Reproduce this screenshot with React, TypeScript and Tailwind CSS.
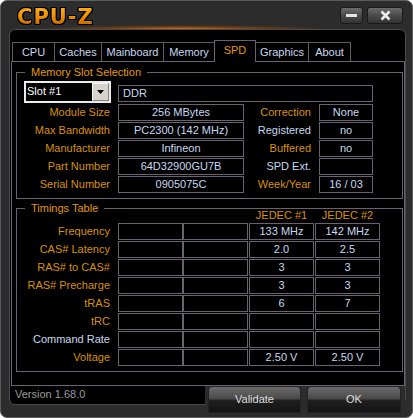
import React from "react"

type SpdRow = {
  label: string
  value: string
  rlabel: string
  rvalue: string
  rOrange: boolean
}

const spdRows: SpdRow[] = [
  { label: "Module Size", value: "256 MBytes", rlabel: "Correction", rvalue: "None", rOrange: true },
  { label: "Max Bandwidth", value: "PC2300 (142 MHz)", rlabel: "Registered", rvalue: "no", rOrange: false },
  { label: "Manufacturer", value: "Infineon", rlabel: "Buffered", rvalue: "no", rOrange: true },
  { label: "Part Number", value: "64D32900GU7B", rlabel: "SPD Ext.", rvalue: "", rOrange: false },
  { label: "Serial Number", value: "0905075C", rlabel: "Week/Year", rvalue: "16 / 03", rOrange: true },
]

// label, jedec #1, jedec #2, orange label?
const timings: [string, string, string, boolean][] = [
  ["Frequency", "133 MHz", "142 MHz", true],
  ["CAS# Latency", "2.0", "2.5", true],
  ["RAS# to CAS#", "3", "3", true],
  ["RAS# Precharge", "3", "3", true],
  ["tRAS", "6", "7", true],
  ["tRC", "", "", true],
  ["Command Rate", "", "", false],
  ["Voltage", "2.50 V", "2.50 V", true],
]

const tabs = [
  { name: "CPU", w: "w-[42px]" },
  { name: "Caches", w: "w-[47px]" },
  { name: "Mainboard", w: "w-[62px]" },
  { name: "Memory", w: "w-[51px]" },
  { name: "SPD", w: "w-[42px]", active: true },
  { name: "Graphics", w: "w-[52px]" },
  { name: "About", w: "w-[43px]", last: true },
]

const box = "h-[17px] border border-[#6a6270] flex items-center justify-center leading-[15px] text-[#c8d8f0]"

function Group({ title, children, className }: { title: string; children: React.ReactNode; className?: string }) {
  return (
    <div className={`relative ml-[4px] w-[387px] border border-[#6a6270] ${className ?? ""}`}>
      <span className="absolute -top-[7px] left-[8px] bg-black px-[6px] leading-[13px] text-[#e09a08]">{title}</span>
      {children}
    </div>
  )
}

export default function App() {
  return (
    <div className="relative w-[413px] h-[418px] overflow-hidden rounded-[7px] border border-[#5c5c5c] bg-[#2c2c2c] font-['Liberation_Sans',Arial,sans-serif] text-[11px]">
      {/* Title bar */}
      <div className="flex h-[28px] justify-between">
        <div className="pl-[16px] pt-[6px] text-[21px] leading-[21px] font-bold tracking-[1px] font-['DejaVu_Sans',sans-serif] bg-[linear-gradient(#ffc030,#f09000_55%,#b05800)] bg-clip-text text-transparent [filter:drop-shadow(1px_0_0_#000)_drop-shadow(-1px_0_0_#000)_drop-shadow(0_1px_0_#000)_drop-shadow(0_-1px_0_#000)]">
          CPU-Z
        </div>
        <div className="flex gap-[4px] pt-[6px] pr-[9px]">
          <button className="flex h-[17px] w-[23px] items-center justify-center rounded-[3px] border border-[#1a1a1a] bg-[linear-gradient(#6c6c6c,#4a4a4a_50%,#333)]">
            <span className="block h-[3px] w-[11px] bg-[#e4e4e4]" />
          </button>
          <button className="flex h-[17px] w-[36px] items-center justify-center rounded-[3px] border border-[#1a1a1a] bg-[linear-gradient(#6c6c6c,#4a4a4a_50%,#333)]">
            <svg width="11" height="11" viewBox="0 0 11 11">
              <path d="M1.5 1.5 L9.5 9.5 M9.5 1.5 L1.5 9.5" stroke="#eeeeee" strokeWidth="2.6" />
            </svg>
          </button>
        </div>
      </div>

      {/* orange glow under the title */}
      <div className="absolute left-[30px] top-[24px] h-[8px] w-[300px] bg-[radial-gradient(ellipse_at_center,#e07810_0%,rgba(170,80,0,0.55)_35%,transparent_70%)]" />

      {/* Black client area */}
      <div className="relative ml-[8px] h-[376px] w-[397px] rounded-[6px] border border-[#4a4a4a] bg-black">
        {/* Tabs */}
        <div className="mt-[10px] flex h-[21px] items-end pl-[2px]">
          {tabs.map((t) =>
            t.active ? (
              <div
                key={t.name}
                className={`relative z-10 -mb-[1px] flex h-[22px] items-center justify-center border-x border-t border-[#6a6270] bg-black pb-[2px] text-[#e8960a] ${t.w}`}
              >
                {t.name}
              </div>
            ) : (
              <div
                key={t.name}
                className={`flex h-[19px] items-center justify-center border-t border-[#5e5e5e] text-[#c8d8f0] ${t.w} ${
                  t.name === "Graphics" ? "" : "border-l"
                } ${t.last ? "border-r" : ""}`}
              >
                {t.name}
              </div>
            )
          )}
        </div>

        {/* SPD panel */}
        <div className="ml-[1px] h-[325px] w-[394px] border border-[#6a6270]">
          <Group title="Memory Slot Selection" className="mt-[10px] pt-[8px] pb-[5px]">
            <div className="flex flex-col gap-[1px] pl-[7px]">
              <div className="flex h-[22px]">
                <div className="flex w-[87px] border-2 border-[#ececec] bg-black">
                  <span className="flex-1 pl-[1px] leading-[16px] text-white">Slot #1</span>
                  <div className="flex w-[17px] items-center justify-center border border-[#f4f4f4] border-r-[#808080] border-b-[#808080] bg-[#d6d3ce]">
                    <svg width="7" height="4" viewBox="0 0 7 4">
                      <path d="M0 0 H7 L3.5 4 Z" fill="#000" />
                    </svg>
                  </div>
                </div>
                <div className={`${box} ml-[7px] mt-[4px] w-[255px] justify-start pl-[4px]`}>DDR</div>
              </div>
              {spdRows.map((r) => (
                <div key={r.label} className="-ml-[7px] flex">
                  <span className="w-[93px] text-right leading-[17px] text-[#d89200]">{r.label}</span>
                  <div className={`${box} ml-[8px] w-[126px]`}>{r.value}</div>
                  <span
                    className={`w-[67px] text-right leading-[17px] ${r.rOrange ? "text-[#d89200]" : "text-[#c8d8f0]"}`}
                  >
                    {r.rlabel}
                  </span>
                  <div className={`${box} ml-[8px] w-[54px]`}>{r.rvalue}</div>
                </div>
              ))}
            </div>
          </Group>

          <Group title="Timings Table" className="mt-[9px] pb-[5px]">
            <div className="flex h-[14px] leading-[13px] text-[#d89200]">
              <span className="ml-[232px] w-[65px] text-center">JEDEC #1</span>
              <span className="ml-[1px] w-[65px] text-center">JEDEC #2</span>
            </div>
            <div className="flex flex-col gap-[1px]">
              {timings.map(([label, a, b, orange]) => (
                <div key={label} className="flex">
                  <span className={`w-[93px] text-right leading-[17px] ${orange ? "text-[#d89200]" : "text-[#c8d8f0]"}`}>
                    {label}
                  </span>
                  <div className={`${box} ml-[8px] w-[65px]`} />
                  <div className={`${box} w-[65px]`} />
                  <div className={`${box} ml-[1px] w-[65px]`}>{a}</div>
                  <div className={`${box} ml-[1px] w-[65px]`}>{b}</div>
                </div>
              ))}
            </div>
          </Group>
        </div>

        {/* Footer */}
        <div className="flex h-[18px] items-start">
          <span className="pl-[5px] pt-[2px] leading-[13px] text-[#9a9a9a]">Version 1.68.0</span>
          <div className="ml-auto flex h-[31px] gap-[6px] bg-[#2c2c2c] pl-[3px] pr-[4px]">
            <button className="h-[27px] w-[93px] rounded-t-[4px] border border-[#222] bg-[linear-gradient(#6a6a6a,#4c4c4c_45%,#1e1e1e_55%,#141414)] text-[11px] text-[#dedede]">
              Validate
            </button>
            <button className="h-[27px] w-[94px] rounded-t-[4px] border border-[#222] bg-[linear-gradient(#6a6a6a,#4c4c4c_45%,#1e1e1e_55%,#141414)] text-[11px] text-[#dedede]">
              OK
            </button>
          </div>
        </div>
      </div>
    </div>
  )
}
